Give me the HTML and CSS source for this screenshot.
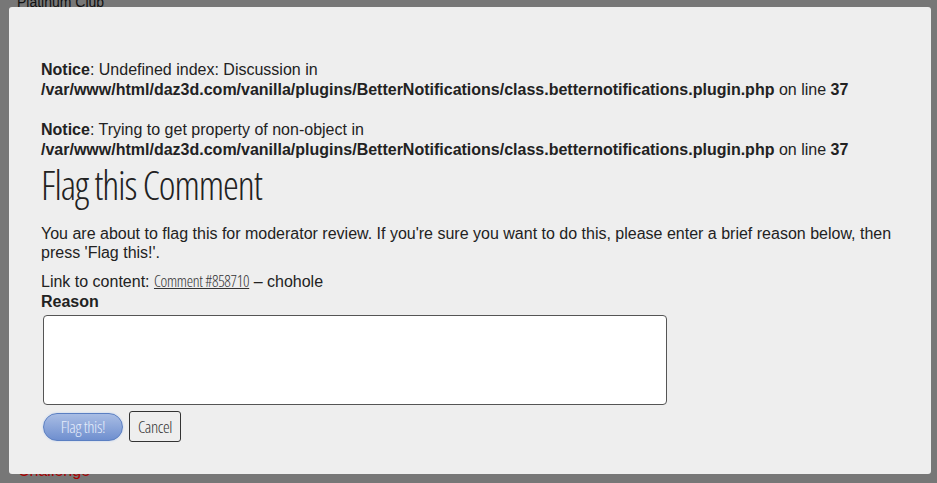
FILE: index.html
```html
<!DOCTYPE html>
<html lang="en">
<head>
    <meta charset="UTF-8">
    <meta name="viewport" content="width=device-width, initial-scale=1.0">
    <title>Flag this Comment</title>
    <link rel="stylesheet" href="styles.css">
</head>
<body>
    <div class="page">
        <div class="club">Platinum Club</div>
        <div class="challenge">Challenge</div>
    </div>

    <div class="overlay">
        <div class="popup">
            <div class="notice"><b>Notice</b>: Undefined index: Discussion in <b>/var/www/html/daz3d.com/vanilla/plugins/BetterNotifications/class.betternotifications.plugin.php</b> on line <b>37</b></div>
            <div class="notice"><b>Notice</b>: Trying to get property of non-object in <b>/var/www/html/daz3d.com/vanilla/plugins/BetterNotifications/class.betternotifications.plugin.php</b> on line <b>37</b></div>

            <h1>Flag this Comment</h1>
            <p class="intro">You are about to flag this for moderator review. If you're sure you want to do this, please enter a brief reason below, then press 'Flag this!'.</p>

            <form class="flag-form">
                <div class="link-line">Link to content: <a href="#">Comment #858710</a> &ndash; chohole</div>
                <label class="reason-label" for="reason">Reason</label>
                <textarea id="reason" class="reason"></textarea>
                <div class="buttons">
                    <button type="button" class="btn-flag">Flag this!</button>
                    <button type="button" class="btn-cancel">Cancel</button>
                </div>
            </form>
        </div>
    </div>
</body>
</html>
```

FILE: styles.css
```css
body {
    margin: 0;
    background-color: #777;
    font-family: "Liberation Sans", Arial, sans-serif;
    font-size: 16px;
    color: #222;
    height: 483px;
    overflow: hidden;
}
.page {
    position: relative;
    display: flow-root;
    height: 483px;
}
.club {
    padding: 0 17px;
    margin-top: -6px;
    font-size: 14px;
    color: #111;
}
.challenge {
    position: absolute;
    left: 18px;
    top: 462px;
    color: #a00;
    font-size: 16px;
}
.overlay {
    position: absolute;
    top: 7px;
    left: 9px;
    z-index: 10;
}
.popup {
    width: 858px;
    height: 414px;
    padding: 53px 32px 0 32px;
    background-color: #eee;
    border-radius: 3px;
}
.notice {
    line-height: 20px;
    margin-bottom: 20px;
}
.notice:last-of-type {
    margin-bottom: 0;
}
h1 {
    font-family: "Open Sans", sans-serif;
    font-weight: 300;
    font-stretch: 75%;
    font-size: 40px;
    line-height: 44px;
    margin: 3px 0 0 0;
    color: #222;
    letter-spacing: -1.1px;
}
.intro {
    margin: 17px 0 0 0;
    line-height: 19px;
}
.link-line {
    margin-top: 9px;
    line-height: 21px;
}
.link-line a {
    font-family: "Open Sans", sans-serif;
    font-weight: 300;
    font-stretch: 75%;
    font-size: 16px;
    letter-spacing: -0.3px;
    color: #333;
}
.reason-label {
    display: block;
    font-weight: bold;
    line-height: 20px;
}
.reason {
    display: block;
    box-sizing: border-box;
    width: 624px;
    height: 90px;
    margin: 3px 0 0 2px;
    background: #fff;
    border: 1px solid #555;
    border-radius: 4px;
    resize: none;
}
.buttons {
    display: flex;
    align-items: center;
    gap: 6px;
    margin: 6px 0 0 2px;
}
.btn-flag {
    width: 80px;
    height: 28px;
    border-radius: 14px;
    border: 1px solid #5b7fc2;
    background: linear-gradient(#a9bde4, #6f8fcf);
    color: #e4ecfa;
    font-family: "Open Sans", sans-serif;
    font-weight: 300;
    font-stretch: 75%;
    font-size: 17px;
    letter-spacing: -0.4px;
    box-shadow: 0 0 2px #b8cdf0;
}
.btn-cancel {
    width: 52px;
    height: 31px;
    border-radius: 3px;
    border: 1px solid #333;
    background: #eee;
    color: #333;
    font-family: "Open Sans", sans-serif;
    font-weight: 300;
    font-stretch: 75%;
    font-size: 17px;
    letter-spacing: -0.4px;
}
```
